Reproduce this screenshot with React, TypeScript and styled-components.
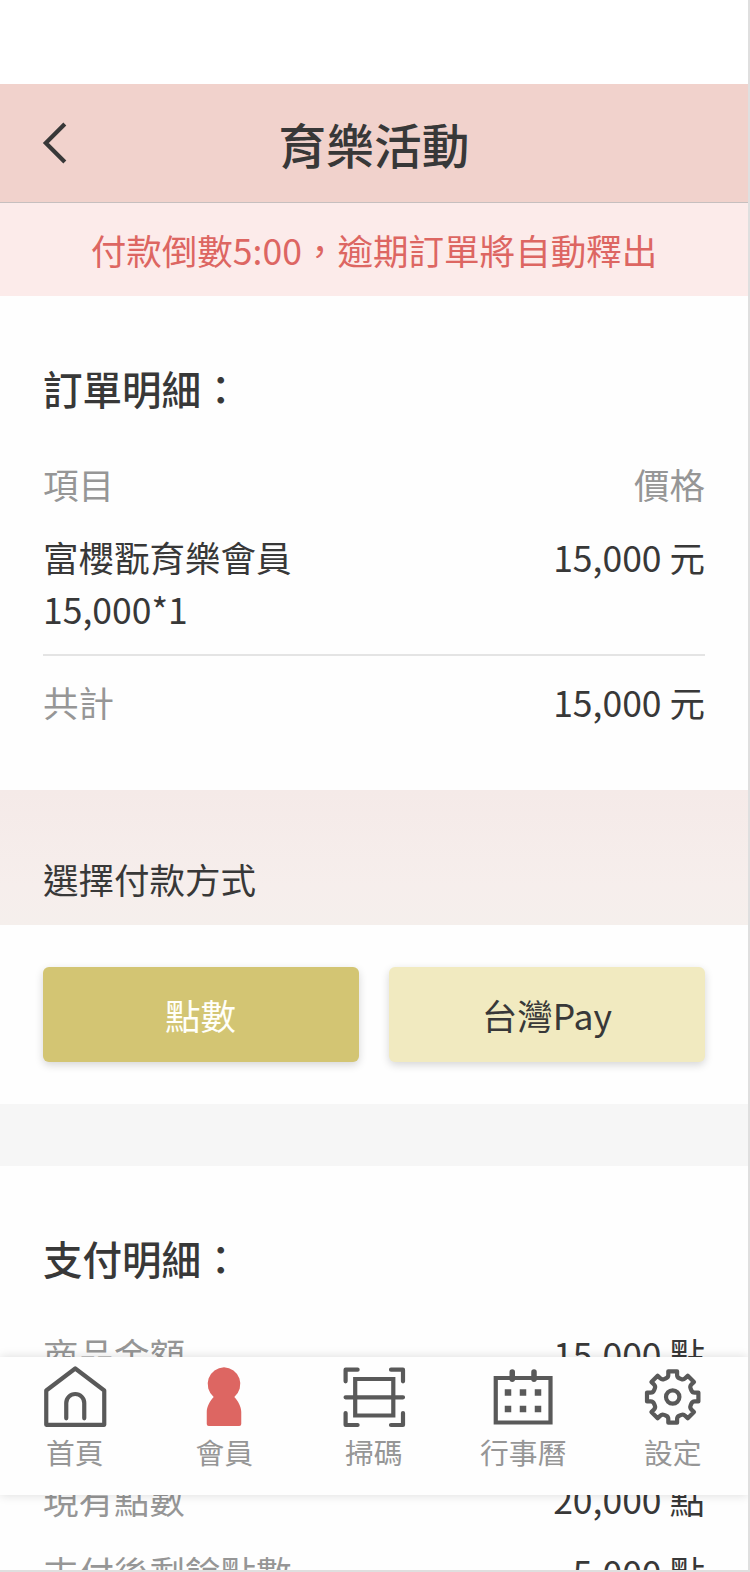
import React from 'react';
import styled, { createGlobalStyle } from 'styled-components';

const GlobalStyle = createGlobalStyle`
  * { box-sizing: border-box; }
  html, body { margin: 0; padding: 0; background: #dfdfdf; overflow: hidden; }
  body { font-family: 'Noto Sans CJK TC', 'Noto Sans', sans-serif; color: #383838; }
  button { font: inherit; border: 0; padding: 0; }
`;

const Screen = styled.div`
  position: relative;
  width: 748px;
  height: 1570px;
  overflow: hidden;
  background: #fefefe;
  display: flex;
  flex-direction: column;
`;

const StatusBar = styled.div`
  flex: none;
  height: 84px;
  background: #fff;
`;

const Header = styled.header`
  flex: none;
  height: 119px;
  background: #f1d2cc;
  border-bottom: 1px solid #c6bfbf;
  display: grid;
  grid-template-columns: 110px 1fr 110px;
  align-items: center;
`;

const BackButton = styled.button`
  background: none;
  height: 100%;
  display: flex;
  align-items: center;
  padding: 0 0 0 42px;
`;

const Title = styled.h1`
  margin: 0;
  padding-top: 1px;
  text-align: center;
  font-size: 47.7px;
  font-weight: 500;
  line-height: 70px;
`;

const Notice = styled.p`
  flex: none;
  margin: 0;
  height: 93px;
  background: #fcebea;
  color: #dd6662;
  text-align: center;
  font-size: 35.55px;
  line-height: 93px;
`;

const Details = styled.section<{ $height?: number }>`
  flex: none;
  height: ${(p) => (p.$height ? `${p.$height}px` : 'auto')};
  padding: 62px 43px 0;
`;

const Heading = styled.h2`
  margin: 0 0 40px;
  font-size: 39.5px;
  font-weight: 500;
  line-height: 60px;
`;

const Row = styled.div<{ $gap?: number }>`
  display: flex;
  justify-content: space-between;
  align-items: flex-start;
  font-size: 35.5px;
  line-height: 52px;
  margin-bottom: ${(p) => p.$gap ?? 21}px;
`;

const Label = styled.span`
  color: #969696;
`;

const ItemName = styled.span`
  width: 270px;
`;

const Divider = styled.hr`
  margin: 0 0 20px;
  border: 0;
  height: 2px;
  background: #e4e4e4;
`;

const MethodBar = styled.div`
  flex: none;
  height: 135px;
  padding: 63px 43px 0;
  background: linear-gradient(#f5eae8, #f6eeec 70%, #f5efec);
  font-size: 35.5px;
  line-height: 52px;
`;

const Methods = styled.div`
  flex: none;
  height: 179px;
  padding: 42px 43px 0 42.5px;
  display: grid;
  grid-template-columns: 1fr 1fr;
  grid-template-rows: 95px;
  gap: 30px;
`;

const Method = styled.button<{ $active?: boolean }>`
  border-radius: 6px;
  background: ${(p) => (p.$active ? '#d3c573' : '#f1eac0')};
  color: ${(p) => (p.$active ? '#fffffa' : '#383838')};
  box-shadow: 0 3px 9px rgba(0, 0, 0, 0.16);
  font-size: 35.5px;
  line-height: 52px;
`;

const Spacer = styled.div`
  flex: none;
  height: 62px;
  background: #f6f6f6;
`;

const TabBar = styled.nav`
  position: absolute;
  left: 0;
  right: 0;
  top: 1357px;
  height: 138px;
  background: #fefefe;
  box-shadow: 0 0 10px rgba(0, 0, 0, 0.14);
  display: grid;
  grid-template-columns: repeat(5, 149.5px);
`;

const Tab = styled.a`
  display: flex;
  flex-direction: column;
  align-items: center;
  padding-top: 6px;
  color: #969696;
  font-size: 28.8px;
  line-height: 40px;
`;

const Icon = styled.svg`
  flex: none;
  display: block;
  width: 68px;
  height: 68px;
  margin-bottom: 1px;
  fill: none;
  stroke: #595959;
  stroke-width: 4.200;
  stroke-linejoin: round;
  stroke-linecap: round;
`;

const HomeIcon = () => (
  <Icon viewBox="0 0 68 68">
    <path d="M5.25 27.5 34.25 5.500 63.25 27.5V61.800H5.25Z" />
    <path d="M25.25 55.300V40a9 9 0 0 1 18 0V55.300" />
  </Icon>
);

const MemberIcon = () => (
  <Icon viewBox="0 0 68 68">
    <path
      d="M34 4.300a16.800 16.800 0 0 1 10.300 29.700C48 38 51.250 43.500 51.250 49V61q0 2-2 2H18.750q-2 0-2-2V49c0-5.500 3.250-11 6.950-15A16.800 16.800 0 0 1 34 4.300Z"
      fill="#dd6662"
      stroke="none"
    />
  </Icon>
);

const ScanIcon = () => (
  <Icon viewBox="0 0 68 68">
    <path d="M5.600 18.300V6.700H17.600M51 6.700H63V18.300M5.600 50V62H17.600M51 62H63V50M5.600 34.300H63" />
    <path d="M15.200 16H53.300V52.500H15.200Z" strokeLinejoin="miter" />
  </Icon>
);

const CalendarIcon = () => (
  <Icon viewBox="0 0 68 68">
    <path d="M6.750 15H61.500V59.500H6.750Z" strokeLinejoin="miter" />
    <path d="M23.250 9V16.300M45 9V16.300" strokeWidth="5.500" />
    <path
      d="M15.750 26.300h6.500v6.500h-6.500zM30.750 26.300h6.500v6.500h-6.500zM45.750 26.300h6.500v6.500h-6.500zM15.750 42.700h6.500v6.500h-6.500zM30.750 42.700h6.500v6.500h-6.500zM45.750 42.700h6.500v6.500h-6.500z"
      fill="#595959"
      stroke="none"
    />
  </Icon>
);

// Eight equal teeth, each drawn pointing right and then turned into place.
const gearOutline = Array.from({ length: 8 }, (_, i) => {
  const a = (i * Math.PI) / 4;
  const at = (x: number, y: number) =>
    `${(33.7 + x * Math.cos(a) - y * Math.sin(a)).toFixed(2)} ${(34 + x * Math.sin(a) + y * Math.cos(a)).toFixed(2)}`;
  return `${i ? 'L' : 'M'}${at(18.7, -6.6)}Q${at(19.6, -4.4)} ${at(22, -4.4)}L${at(25.7, -4.4)}L${at(25.7, 4.4)}L${at(22, 4.4)}Q${at(19.6, 4.4)} ${at(18.7, 6.6)}`;
}).join('') + 'Z';

const GearIcon = () => (
  <Icon viewBox="0 0 68 68">
    <path d={gearOutline} />
    <circle cx="33.700" cy="34" r="6.700" />
  </Icon>
);

const tabs = [
  { label: '首頁', Glyph: HomeIcon },
  { label: '會員', Glyph: MemberIcon },
  { label: '掃碼', Glyph: ScanIcon },
  { label: '行事曆', Glyph: CalendarIcon },
  { label: '設定', Glyph: GearIcon },
];

export default function App() {
  return (
    <>
      <GlobalStyle />
      <Screen>
        <StatusBar />
        <Header>
          <BackButton aria-label="返回">
            <svg width="26" height="44" viewBox="0 0 26 44" fill="none" stroke="#383838" strokeWidth="4.200">
              <path d="M22.800 3 3.800 22 22.800 41" />
            </svg>
          </BackButton>
          <Title>育樂活動</Title>
        </Header>
        <Notice>付款倒數5:00，逾期訂單將自動釋出</Notice>
        <Details $height={494}>
          <Heading>訂單明細：</Heading>
          <Row>
            <Label>項目</Label>
            <Label>價格</Label>
          </Row>
          <Row $gap={19}>
            <ItemName>富櫻翫育樂會員15,000*1</ItemName>
            <span>15,000 元</span>
          </Row>
          <Divider />
          <Row>
            <Label>共計</Label>
            <span>15,000 元</span>
          </Row>
        </Details>
        <MethodBar>選擇付款方式</MethodBar>
        <Methods>
          <Method $active>點數</Method>
          <Method>台灣Pay</Method>
        </Methods>
        <Spacer />
        <Details>
          <Heading>支付明細：</Heading>
          <Row $gap={93}>
            <Label>商品金額</Label>
            <span>15,000 點</span>
          </Row>
          <Row>
            <Label>現有點數</Label>
            <span>20,000 點</span>
          </Row>
          <Row>
            <Label>支付後剩餘點數</Label>
            <span>5,000 點</span>
          </Row>
        </Details>
        <TabBar>
          {tabs.map(({ label, Glyph }) => (
            <Tab key={label}>
              <Glyph />
              {label}
            </Tab>
          ))}
        </TabBar>
      </Screen>
    </>
  );
}
